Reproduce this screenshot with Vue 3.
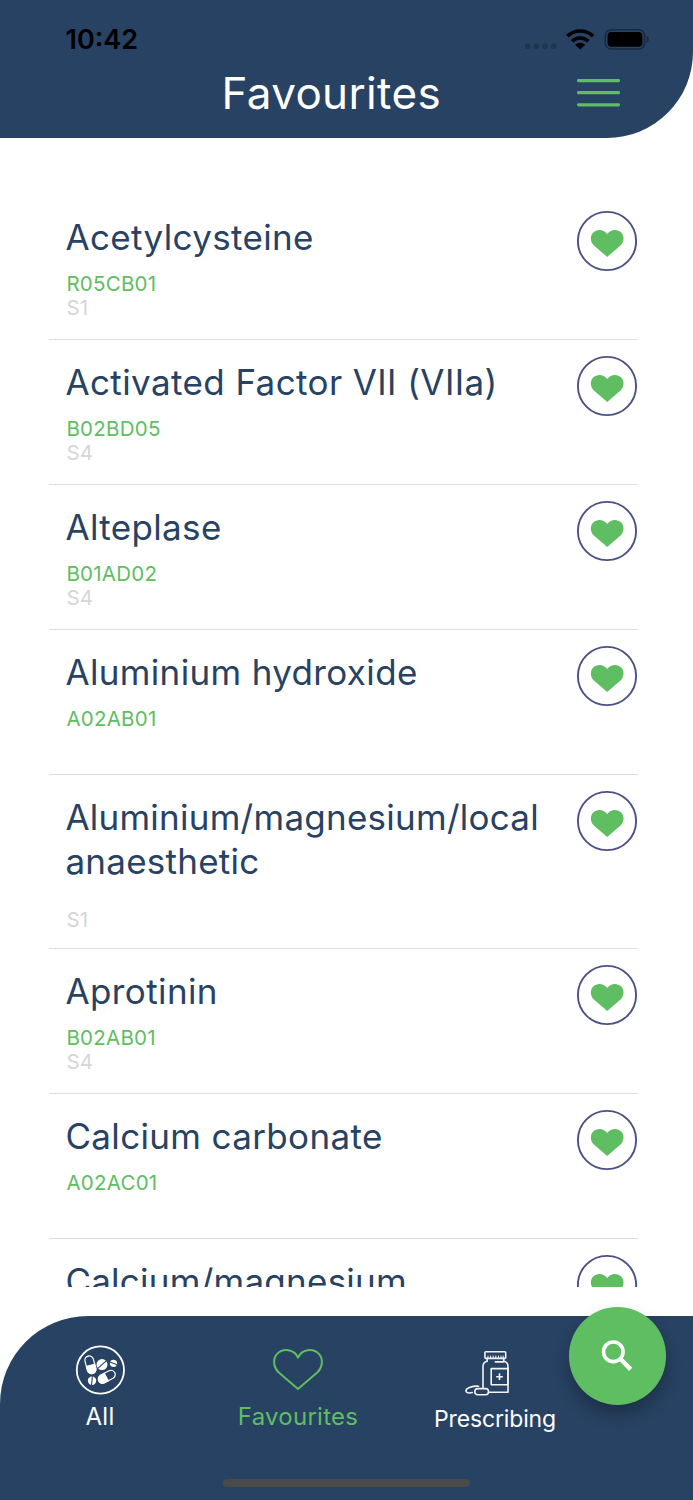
<script setup>
const drugs = [
  { name: 'Acetylcysteine', code: 'R05CB01', schedule: 'S1' },
  { name: 'Activated Factor VII (VIIa)', code: 'B02BD05', schedule: 'S4', fit: 'wide' },
  { name: 'Alteplase', code: 'B01AD02', schedule: 'S4' },
  { name: 'Aluminium hydroxide', code: 'A02AB01', schedule: '' },
  { name: 'Aluminium/magnesium/local anaesthetic', code: '', schedule: 'S1', tall: true, fit: 'narrow' },
  { name: 'Aprotinin', code: 'B02AB01', schedule: 'S4', fit: 'wide' },
  { name: 'Calcium carbonate', code: 'A02AC01', schedule: '' },
  { name: 'Calcium/magnesium', code: '', schedule: '', fit: 'narrow' },
]
</script>

<template>
  <div class="screen">
    <header class="header">
      <div class="status">
        <span class="time">10:42</span>
        <svg class="indicators" width="126" height="26" viewBox="0 0 126 26">
          <g fill="#20344f">
            <rect x="2" y="17.6" width="5.4" height="5.4" rx="1.8" />
            <rect x="10.7" y="17.6" width="5.4" height="5.4" rx="1.8" />
            <rect x="19.3" y="17.6" width="5.4" height="5.4" rx="1.8" />
            <rect x="28" y="17.6" width="5.4" height="5.4" rx="1.8" />
          </g>
          <g fill="none" stroke="#000" stroke-width="3.6">
            <path d="M44.4 10.1 A18.6 18.6 0 0 1 70.1 10.1" />
            <path d="M49.1 15.3 A11.7 11.7 0 0 1 65.4 15.3" />
          </g>
          <path d="M57.2 23.6 L52.2 18.8 A7 7 0 0 1 62.2 18.8 Z" />
          <rect x="82.3" y="3.7" width="39.4" height="19.4" rx="6" fill="none" stroke="#182941" stroke-width="1.5" />
          <rect x="84.6" y="6" width="34.8" height="14.8" rx="3.8" />
          <path d="M123.6 10 Q125.8 11 125.8 13.4 T123.6 16.8 Z" fill="#182941" />
        </svg>
      </div>
      <div class="title-row">
        <h1>Favourites</h1>
        <button class="menu" aria-label="Menu">
          <svg width="43" height="30" viewBox="0 0 43 30" fill="#5fbd62">
            <rect y="1" width="43" height="3.2" rx="1.4" />
            <rect y="13.1" width="43" height="3.2" rx="1.4" />
            <rect y="25.3" width="43" height="3.2" rx="1.4" />
          </svg>
        </button>
      </div>
    </header>

    <main class="list">
      <article v-for="d in drugs" :key="d.name" class="row" :class="{ tall: d.tall }">
        <div class="info">
          <h2 :class="d.fit">{{ d.name }}</h2>
          <p class="code">{{ d.code }}</p>
          <p class="schedule">{{ d.schedule }}</p>
        </div>
        <svg class="fav" width="62" height="62" viewBox="0 0 62 62">
          <circle cx="31" cy="31" r="29.1" fill="none" stroke="#4b5085" stroke-width="1.9" />
          <path fill="#5fbd62" d="M31.2 46.9 L17.6 35.2 C13.9 31.6 14.1 25.7 17.2 22.6 C20.9 18.9 27.4 19 31.2 23.9 C35 19 41.5 18.9 45.2 22.6 C48.3 25.7 48.5 31.6 44.8 35.2 Z" />
        </svg>
      </article>
    </main>

    <footer class="nav">
      <div class="tab all">
        <svg width="50" height="50" viewBox="0 0 50 50">
          <circle cx="25.4" cy="25" r="23.6" fill="none" stroke="#fff" stroke-width="1.8" />
          <g transform="translate(15.4 19.8) rotate(-15)">
            <rect x="-4.3" y="-9" width="8.6" height="18" rx="4.3" fill="none" stroke="#fff" stroke-width="1.2" />
            <path d="M-4.9 0 H4.9 V4.7 A4.9 4.9 0 0 1 -4.9 4.7 Z" fill="#fff" />
          </g>
          <g transform="translate(31.8 31.8) rotate(62)">
            <rect x="-4.2" y="-9" width="8.4" height="18" rx="4.2" fill="none" stroke="#fff" stroke-width="1.2" />
            <path d="M-4.8 0 H4.8 V4.8 A4.8 4.8 0 0 1 -4.8 4.8 Z" fill="#fff" />
          </g>
          <g fill="#fff">
            <circle cx="27" cy="19.6" r="5.5" /><circle cx="38.5" cy="18.3" r="3.6" /><circle cx="17" cy="35.7" r="4.2" />
          </g>
          <g stroke="#284263" stroke-width="1.1">
            <path d="M22.7 23.4 L31.2 15.8" /><path d="M34.6 16.9 L42.4 19.7" /><path d="M17.4 31.2 L16.5 40.2" />
          </g>
        </svg>
        <span>All</span>
      </div>
      <div class="tab active">
        <svg width="52" height="50" viewBox="0 0 52 50">
          <path fill="none" stroke="#5fbd62" stroke-width="2" stroke-linejoin="round" d="M26 44 L6.5 27.3 C.9 21.5 1 13.4 4.9 9.1 C10.8 2.8 22.4 3.9 26 12.6 C29.6 3.9 41.2 2.8 47.1 9.1 C51 13.4 51.1 21.5 45.5 27.3 Z" />
        </svg>
        <span>Favourites</span>
      </div>
      <div class="tab prescribing">
        <svg width="50" height="50" viewBox="0 0 50 50" fill="none" stroke="#f3f3f1" stroke-width="1.6" stroke-linejoin="round" stroke-linecap="round">
          <rect x="20.9" y="2.7" width="20.8" height="6.7" rx="1" />
          <path d="M24 7V9 M26.6 7V9 M29.2 7V9 M31.8 7V9 M34.4 7V9 M37 7V9 M39.2 7V9" stroke-width="1" />
          <path d="M23.2 9.4 V12.3 Q19 13.2 19 17.6 V38.5 M39.7 9.4 V12.3 Q44 13.2 44 17.6 V43.2 H24.6 M31.3 12.9 H39.5" />
          <rect x="27.2" y="19.6" width="16.7" height="16.2" />
          <path d="M35.5 24.3 V31 M32.2 27.7 H38.9" stroke-linecap="butt" />
          <rect x="10.8" y="39.6" width="13.7" height="6.1" rx="3" />
          <path d="M14.6 37.2 C7.5 36.8 1.5 39.6 2 42.1 Q2.7 44.8 8.3 43.5" />
        </svg>
        <span>Prescribing</span>
      </div>
      <button class="fab" aria-label="Search">
        <svg width="34" height="34" viewBox="0 0 34 34" fill="none" stroke="#fff">
          <circle cx="13.3" cy="12.8" r="9.8" stroke-width="3.6" />
          <path d="M20.7 20.2 L30.7 30.4" stroke-width="4.4" />
        </svg>
      </button>
      <div class="home"></div>
    </footer>
  </div>
</template>

<style>
body { margin: 0; background: #fff; }
</style>

<style scoped>
.screen {
  width: 693px;
  height: 1500px;
  display: flex;
  flex-direction: column;
  overflow: hidden;
  background: #fff;
  font-family: Inter, "Liberation Sans", sans-serif;
}
h1, h2, p { margin: 0; font-weight: 400; }
button { border: 0; padding: 0; background: none; }
.header {
  flex: none;
  height: 138px;
  box-sizing: border-box;
  padding-top: 26px;
  background: #284263;
  border-bottom-right-radius: 86px;
}
.status { display: flex; justify-content: space-between; height: 26px; padding: 0 44px 0 65.5px; }
.time { font-size: 27px; line-height: 28px; font-weight: 600; color: #000; }
.title-row { display: flex; justify-content: space-between; align-items: flex-start; padding: 11px 73px 0 221.5px; }
h1 { font-size: 44px; line-height: 60px; color: #fff; white-space: nowrap; letter-spacing: 0.35px; }
.menu { padding-top: 15px; }
.menu svg { display: block; }
.list { flex: none; height: 1092px; margin-top: 57px; padding: 0 55px 0 49px; overflow: hidden; }
.row {
  display: flex;
  justify-content: space-between;
  align-items: flex-start;
  height: 145px;
  box-sizing: border-box;
  border-bottom: 1px solid #dedede;
  padding: 15px 0 0 16.4px;
}
.row.tall { height: 174px; }
.info { width: 500px; padding-top: 6px; }
h2 { font-size: 35px; line-height: 43.5px; color: #284263; letter-spacing: 0.35px; }
h2.wide { letter-spacing: 0.4px; }
h2.narrow { letter-spacing: 0.25px; }
p { margin-left: 1px; font-size: 20.5px; line-height: 24.4px; height: 24.4px; letter-spacing: 0.25px; }
.code { margin-top: 12.4px; color: #5fbd62; }
.tall .code { margin-top: 1px; }
.schedule { color: #d6d6d6; }
.fav { flex: none; }
.nav {
  position: relative;
  flex: none;
  height: 184.5px;
  margin-top: 28.5px;
  box-sizing: border-box;
  padding-top: 29px;
  background: #284263;
  border-top-left-radius: 88px;
  display: grid;
  grid-template-columns: 200px 196px 198px;
  align-items: start;
}
.tab { display: flex; flex-direction: column; align-items: center; color: #fff; font-size: 24px; line-height: 30px; letter-spacing: 0.25px; }
.tab svg { display: block; }
.tab span { margin-top: 7.2px; }
.prescribing { padding-top: 4px; }
.prescribing span { margin-top: 5.2px; font-size: 23px; letter-spacing: -0.15px; }
.prescribing svg { margin-left: -13px; }
.active { color: #5fbd62; }
.fab {
  position: absolute;
  left: 568.5px;
  top: -8.5px;
  width: 97.5px;
  height: 97.5px;
  border-radius: 50%;
  background: #5fbd62;
  box-shadow: 0 9px 16px rgba(0, 0, 0, 0.28);
  display: grid;
  place-items: center;
}
.home { position: absolute; left: 223px; bottom: 13px; width: 247px; height: 8px; border-radius: 4px; background: #4a4a4a; }
</style>
